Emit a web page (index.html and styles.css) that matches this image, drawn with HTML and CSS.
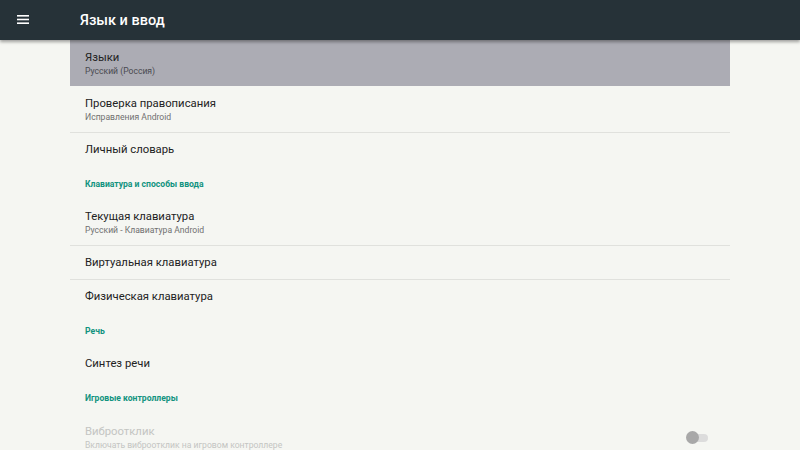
FILE: index.html
```html
<!DOCTYPE html>
<html lang="ru">
<head>
    <meta charset="UTF-8">
    <meta name="viewport" content="width=device-width, initial-scale=1.0">
    <title>Язык и ввод</title>
    <link rel="stylesheet" href="styles.css">
</head>
<body>
    <header class="toolbar">
        <svg class="menu-icon" width="12" height="9" viewBox="0 0 12 9">
            <rect x="0" y="0" width="12" height="1.6" fill="#fff"/>
            <rect x="0" y="3.7" width="12" height="1.6" fill="#fff"/>
            <rect x="0" y="7.4" width="12" height="1.6" fill="#fff"/>
        </svg>
        <h1>Язык и ввод</h1>
    </header>

    <main class="list">
        <div class="item two-line selected">
            <div class="title">Языки</div>
            <div class="summary">Русский (Россия)</div>
        </div>
        <div class="item two-line divider">
            <div class="title">Проверка правописания</div>
            <div class="summary">Исправления Android</div>
        </div>
        <div class="item">
            <div class="title">Личный словарь</div>
        </div>

        <div class="category">Клавиатура и способы ввода</div>
        <div class="item two-line divider">
            <div class="title">Текущая клавиатура</div>
            <div class="summary">Русский - Клавиатура Android</div>
        </div>
        <div class="item divider">
            <div class="title">Виртуальная клавиатура</div>
        </div>
        <div class="item">
            <div class="title">Физическая клавиатура</div>
        </div>

        <div class="category">Речь</div>
        <div class="item">
            <div class="title">Синтез речи</div>
        </div>

        <div class="category">Игровые контроллеры</div>
        <div class="item two-line disabled">
            <div class="text">
                <div class="title">Виброотклик</div>
                <div class="summary">Включать виброотклик на игровом контроллере</div>
            </div>
            <div class="switch">
                <span class="track"></span>
                <span class="thumb"></span>
            </div>
        </div>
    </main>
</body>
</html>
```

FILE: styles.css
```css
body {
    font-family: Roboto, "Noto Sans", sans-serif;
    margin: 0;
    padding: 0;
    width: 800px;
    height: 450px;
    overflow: hidden;
    background-color: #f5f6f2;
}

.toolbar {
    position: relative;
    z-index: 2;
    display: flex;
    align-items: center;
    height: 40px;
    background-color: #263238;
    box-shadow: 0 2px 3px rgba(0, 0, 0, 0.35);
}

.menu-icon {
    margin-left: 17px;
    margin-bottom: 1px;
}

.toolbar h1 {
    margin: 1px 0 0 51px;
    color: #fff;
    font-size: 14.5px;
    font-weight: 500;
}

.list {
    width: 660px;
    margin-left: 70px;
}

.item {
    display: flex;
    flex-direction: column;
    justify-content: center;
    height: 33.5px;
    padding: 2px 15px 0;
    box-sizing: border-box;
}

.item.two-line {
    height: 46.5px;
}

.item.selected {
    height: 46px;
    background-color: #acacb4;
}

.item.divider {
    border-bottom: 1px solid #e0e1dd;
}

.title {
    color: #222;
    font-size: 11.3px;
    line-height: 14px;
}

.summary {
    color: #707070;
    font-size: 8.6px;
    line-height: 12px;
}

.selected .summary {
    color: #4a4a50;
}

.category {
    display: flex;
    align-items: center;
    height: 33.5px;
    padding: 3px 15px 0;
    box-sizing: border-box;
    color: #12937f;
    font-size: 8.6px;
    font-weight: 700;
}

.item.disabled {
    flex-direction: row;
    align-items: center;
    justify-content: space-between;
    padding-right: 20px;
}

.disabled .title,
.disabled .summary {
    color: #c4c5c2;
}

.switch {
    position: relative;
    width: 24px;
    height: 14px;
    margin-top: 1px;
}

.track {
    position: absolute;
    left: 4px;
    top: 3px;
    width: 18px;
    height: 8px;
    border-radius: 4px;
    background-color: #dcdcdc;
}

.thumb {
    position: absolute;
    left: 0;
    top: 0;
    width: 13px;
    height: 13px;
    border-radius: 50%;
    background-color: #a8a8a8;
}
```
